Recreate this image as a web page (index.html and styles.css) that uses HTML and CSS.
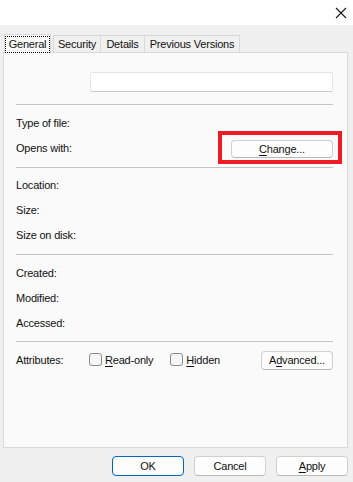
FILE: index.html
```html
<!DOCTYPE html>
<html>
<head>
<meta charset="utf-8">
<link rel="stylesheet" href="styles.css">
</head>
<body>
<div class="window">
  <div class="titlebar">
    <svg class="close" width="12" height="12" viewBox="0 0 12 12"><path d="M1 1 L11 11 M11 1 L1 11" stroke="#1a1a1a" stroke-width="1.1" fill="none"/></svg>
  </div>
  <div class="tabs">
    <div class="tab active"><span class="focus">General</span></div>
    <div class="tab t-sec">Security</div>
    <div class="tab t-det">Details</div>
    <div class="tab t-prev">Previous Versions</div>
  </div>
  <div class="panel">
    <div class="namerow"><div class="namebox"></div></div>
    <div class="sep s1"></div>
    <div class="row"><span class="lbl">Type of file:</span></div>
    <div class="row"><span class="lbl">Opens with:</span>
      <div class="changewrap"><div class="btn change"><u>C</u>hange...</div><div class="redbox"></div></div>
    </div>
    <div class="sep s2"></div>
    <div class="row"><span class="lbl">Location:</span></div>
    <div class="row"><span class="lbl">Size:</span></div>
    <div class="row"><span class="lbl">Size on disk:</span></div>
    <div class="sep s3"></div>
    <div class="row"><span class="lbl">Created:</span></div>
    <div class="row"><span class="lbl">Modified:</span></div>
    <div class="row"><span class="lbl">Accessed:</span></div>
    <div class="sep s4"></div>
    <div class="row"><span class="lbl">Attributes:</span>
      <span class="check"><span class="box"></span><u>R</u>ead-only</span>
      <span class="check hid"><span class="box"></span><u>H</u>idden</span>
      <div class="btn adv">A<u>d</u>vanced...</div>
    </div>
  </div>
  <div class="buttons">
    <div class="btn dlg ok">OK</div>
    <div class="btn dlg">Cancel</div>
    <div class="btn dlg"><u>A</u>pply</div>
  </div>
</div>
</body>
</html>
```
FILE: styles.css
```css
html, body {
  margin: 0;
  padding: 0;
}
body {
  width: 353px;
  height: 482px;
  background: #f0f0f0;
  font-family: "Liberation Sans", Arial, sans-serif;
  font-size: 11px;
  letter-spacing: -0.2px;
  color: #111;
  overflow: hidden;
}
.window {
  display: flex;
  flex-direction: column;
  height: 482px;
}
.titlebar {
  height: 25px;
  background: #ffffff;
  display: flex;
  justify-content: flex-end;
  align-items: center;
  padding-right: 6px;
  box-sizing: border-box;
}
.tabs {
  display: flex;
  margin-top: 10px;
  padding-left: 4px;
  height: 17px;
  align-items: flex-end;
}
.tab {
  height: 17px;
  box-sizing: border-box;
  border: 1px solid #d9d9d9;
  border-bottom: none;
  background: #f0f0f0;
  line-height: 16px;
  text-align: center;
  margin-left: -1px;
}
.tab.active {
  width: 47px;
  height: 19px;
  background: #fafafa;
  position: relative;
  z-index: 2;
  margin-left: 0;
  padding-top: 1px;
  margin-bottom: -1px;
  margin-right: 3px;
}
.t-sec { width: 48px; }
.t-det { width: 45px; }
.t-prev { width: 96px; }
.focus {
  display: inline-block;
  border: 1px dotted #000;
  width: 45px;
  box-sizing: border-box;
  line-height: 15px;
}
.panel {
  margin-left: 3px;
  width: 345px;
  height: 396px;
  box-sizing: border-box;
  background: #fafafa;
  border: 1px solid #d9d9d9;
  padding: 19px 14px 0 12px;
}
.namerow {
  display: flex;
  height: 20px;
  padding-left: 74px;
}
.namebox {
  flex: 1;
  background: #fff;
  border: 1px solid #e5e5e5;
  border-bottom: 1px solid #c8c8c8;
  border-radius: 2px;
  box-sizing: border-box;
  height: 20px;
}
.sep {
  height: 1px;
  background: #c4c4c4;
}
.s1 { margin: 12px 0 5px; }
.s2 { margin: 7px 0 4px; }
.s3 { margin: 7px 0 5px; }
.s4 { margin: 6px 0 5px; }
.row {
  height: 25px;
  display: flex;
  align-items: center;
  position: relative;
}
.lbl {
  width: 73px;
  flex: none;
}
.btn {
  background: #fdfdfd;
  border: 1px solid #d0d0d0;
  border-bottom-color: #b8b8b8;
  border-radius: 4px;
  box-sizing: border-box;
  text-align: center;
  height: 19px;
  line-height: 17px;
}
.changewrap {
  position: relative;
  margin-left: auto;
  margin-top: 3px;
}
.change {
  width: 102px;
  height: 18px;
  line-height: 16px;
}
.redbox {
  position: absolute;
  left: -13px;
  top: -9px;
  right: -9px;
  bottom: -6px;
  border: 4px solid #ed1c24;
}
.check {
  display: flex;
  align-items: center;
}
.check .box {
  width: 13px;
  height: 13px;
  box-sizing: border-box;
  border: 1px solid #8b8b8b;
  border-radius: 3px;
  background: #f6f6f6;
  margin-right: 3px;
}
.hid {
  margin-left: 17px;
}
.adv {
  margin-left: auto;
  margin-top: 2px;
  width: 72px;
}
.buttons {
  display: flex;
  justify-content: flex-end;
  gap: 10px;
  padding-right: 5px;
  margin-top: 8px;
}
.dlg {
  width: 72px;
  height: 20px;
  line-height: 18px;
}
.ok {
  border: 1px solid #0067c0;
}
u {
  text-decoration: underline;
  text-underline-offset: 2px;
}
```
